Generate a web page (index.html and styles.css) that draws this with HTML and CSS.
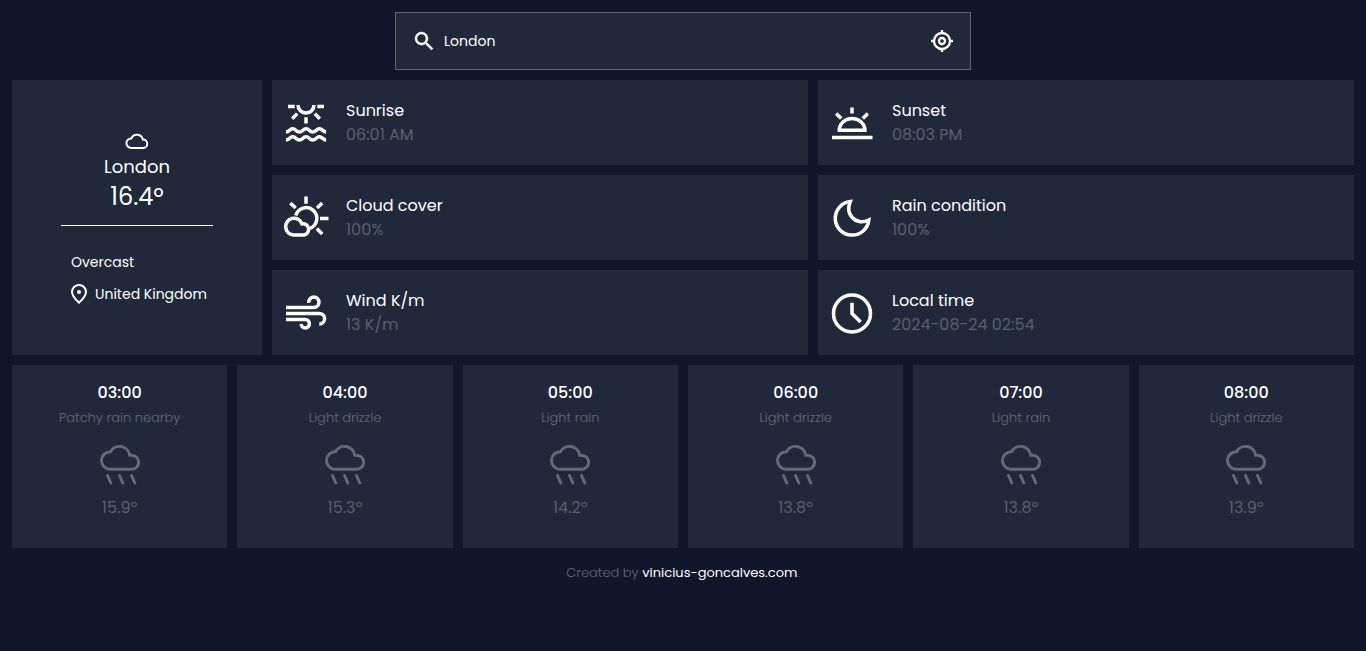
FILE: index.html
```html
<!DOCTYPE html>
<html lang="en">
<head>
<meta charset="utf-8">
<meta name="viewport" content="width=device-width, initial-scale=1">
<title>Weather</title>
<link rel="stylesheet" href="styles.css">
</head>
<body>
<svg class="sprite" aria-hidden="true">
  <symbol id="rain" viewBox="0 0 48 48">
    <path d="M14 29.3a8.8 8.8 0 0 1 .5-17.6A10.3 10.3 0 0 1 33.7 15.2h1.9a7.05 7.05 0 0 1 0 14.1z"/>
    <path d="M11.5 35.5l3.300 7.500M23.500 35.500l3.300 7.500M35.500 35.500l3.300 7.500"/>
  </symbol>
</svg>
<main class="page">
  <form class="search" role="search">
    <label class="search-label" for="city" aria-label="City">
      <svg class="icon-sm" viewBox="0 0 24 24"><path fill="currentColor" stroke="currentColor" stroke-width=".5" d="M15.5 14h-.79l-.28-.27A6.47 6.47 0 0 0 16 9.5 6.5 6.5 0 1 0 9.5 16c1.61 0 3.09-.59 4.23-1.57l.27.28v.79l5.5 5.49L20.99 19.5zm-6 0a4.5 4.5 0 1 1 0-9 4.5 4.5 0 0 1 0 9z"/></svg>
    </label>
    <input class="search-input" id="city" type="text" value="London">
    <button class="locate" type="button" aria-label="Use my location">
      <svg class="icon-sm" viewBox="0 0 24 24" fill="none" stroke="currentColor" stroke-width="2.3"><circle cx="12" cy="12" r="8"/><circle cx="12" cy="12" r="3"/><path d="M12 1v4M12 19v4M1 12h4M19 12h4"/></svg>
    </button>
  </form>

  <div class="overview">
    <section class="card current">
      <div class="current-top">
        <svg class="icon-sm" viewBox="0 0 24 24" fill="none" stroke="currentColor" stroke-width="2"><path d="M6.200 19a4.800 4.800 0 0 1 .1-9.600A6.100 6.100 0 0 1 17.900 10.600a4.200 4.200 0 0 1 .3 8.400z"/></svg>
        <h1 class="current-city">London</h1>
        <p class="current-temp">16.4º</p>
      </div>
      <div class="current-info">
        <p>Overcast</p>
        <p class="place"><svg class="pin" viewBox="0 0 16 20" fill="none" stroke="currentColor" stroke-width="2"><path d="M8 18.700C4.500 15.500 1 12.200 1 8a7 7 0 0 1 14 0c0 4.200-3.500 7.500-7 10.700z"/><circle cx="8" cy="8" r="2" fill="currentColor" stroke="none"/></svg>United Kingdom</p>
      </div>
    </section>

    <section class="details">
      <article class="card detail">
        <svg class="icon-lg" viewBox="0 0 48 48"><path d="M6 7.500h6.700M35.300 7.500H42M16 6a8 8 0 0 0 16 0M24 18.300v6.200M15.200 14.600l-5 5.200M32.800 14.600l5 5.200M4 33c3.300 0 3.300-3.200 6.700-3.200s3.300 3.200 6.700 3.200 3.300-3.200 6.700-3.200 3.300 3.200 6.600 3.200 3.400-3.200 6.700-3.200 3.300 3.200 6.700 3.200M4 41c3.300 0 3.300-3.200 6.700-3.200s3.300 3.200 6.700 3.200 3.300-3.200 6.700-3.200 3.300 3.200 6.600 3.200 3.400-3.200 6.700-3.200 3.300 3.200 6.700 3.200"/></svg>
        <div class="detail-text"><h2>Sunrise</h2><p>06:01 AM</p></div>
      </article>
      <article class="card detail">
        <svg class="icon-lg" viewBox="0 0 48 48"><path d="M4 38.500h40.500M11.300 31.200a12.800 11.600 0 0 1 25.600 0zM24 8.500v6M8.200 14.400l5 5M39.800 14.400l-5 5"/></svg>
        <div class="detail-text"><h2>Sunset</h2><p>08:03 PM</p></div>
      </article>
      <article class="card detail">
        <svg class="icon-lg" viewBox="0 0 48 48"><path d="M24 2.500v7.300M8.400 8.900l5.200 5.200M40.200 8.900l-5.200 5.200M38 24.500h8.500M34.800 34.600l5.400 5.400M13.800 21.500A10.700 10.700 0 1 1 28 34.300M11.700 41a8.400 8.400 0 1 1 8.300-11.200A5.600 5.600 0 1 1 21.900 41z"/></svg>
        <div class="detail-text"><h2>Cloud cover</h2><p>100%</p></div>
      </article>
      <article class="card detail">
        <svg class="icon-lg" viewBox="0 0 48 48"><path d="M22.300 7.600a16.800 16.800 0 1 0 18.500 18.400c-6.500 3.300-13 1.600-16.600-2.500-3.800-4.300-4.700-9.500-1.900-15.900z"/></svg>
        <div class="detail-text"><h2>Rain condition</h2><p>100%</p></div>
      </article>
      <article class="card detail">
        <svg class="icon-lg" viewBox="0 0 48 48"><path d="M4 18.500h27.700a5.250 5.250 0 0 0 0-10.500 5.300 5.300 0 0 0-5 5.800M4 24.500h33.300a5.300 5.300 0 0 1 0 10.600M4 30.500h19.200a4.200 4.200 0 0 1 0 8.400 4 4 0 0 1-4-4"/></svg>
        <div class="detail-text"><h2>Wind K/m</h2><p>13 K/m</p></div>
      </article>
      <article class="card detail">
        <svg class="icon-lg" viewBox="0 0 48 48"><circle cx="24" cy="24.500" r="18.500"/><path d="M24 13.800v10.700l8.600 8.600"/></svg>
        <div class="detail-text"><h2>Local time</h2><p>2024-08-24 02:54</p></div>
      </article>
    </section>
  </div>

  <section class="hours">
    <article class="card hour"><h3>03:00</h3><p class="sky">Patchy rain nearby</p><svg class="icon-rain"><use href="#rain"/></svg><p>15.9º</p></article>
    <article class="card hour"><h3>04:00</h3><p class="sky">Light drizzle</p><svg class="icon-rain"><use href="#rain"/></svg><p>15.3º</p></article>
    <article class="card hour"><h3>05:00</h3><p class="sky">Light rain</p><svg class="icon-rain"><use href="#rain"/></svg><p>14.2º</p></article>
    <article class="card hour"><h3>06:00</h3><p class="sky">Light drizzle</p><svg class="icon-rain"><use href="#rain"/></svg><p>13.8º</p></article>
    <article class="card hour"><h3>07:00</h3><p class="sky">Light rain</p><svg class="icon-rain"><use href="#rain"/></svg><p>13.8º</p></article>
    <article class="card hour"><h3>08:00</h3><p class="sky">Light drizzle</p><svg class="icon-rain"><use href="#rain"/></svg><p>13.9º</p></article>
  </section>

  <footer class="footer">Created by <a href="#">vinicius-goncalves.com</a>.</footer>
</main>
</body>
</html>
```
FILE: styles.css
```css
* {
  box-sizing: border-box;
  margin: 0;
  padding: 0;
}

body {
  background: #0f172a;
  color: #fff;
  font: 400 16px/24px Poppins, Inter, "Open Sans", sans-serif;
}

h1, h2, h3 {
  font-weight: 400;
  font-size: 16px;
}

svg {
  display: block;
  flex: none;
}

.sprite {
  display: none;
}

.page {
  display: flex;
  flex-direction: column;
  gap: 10px;
  padding: 12px;
}

.card {
  background: #20293a;
}

.icon-sm {
  width: 24px;
  height: 24px;
}

.icon-lg,
.icon-rain {
  width: 48px;
  height: 48px;
  fill: none;
  stroke: currentColor;
  stroke-width: 3.5px;
}

.icon-rain {
  margin: 10px 0 8px;
  color: #646a73;
  stroke-width: 3px;
  stroke-linecap: round;
}

.search {
  display: flex;
  align-items: center;
  gap: 8px;
  width: 100%;
  max-width: 576px;
  margin: 0 auto;
  padding: 16px;
  background: #20293a;
  border: 1px solid #5f6671;
}

.search-input {
  flex: 1;
  min-width: 0;
  height: 24px;
  border: 0;
  outline: 0;
  background: transparent;
  color: inherit;
  font: inherit;
  font-size: 14px;
}

.locate {
  border: 0;
  background: transparent;
  color: inherit;
  cursor: pointer;
}

.overview {
  display: grid;
  grid-template-columns: 250px 1fr;
  gap: 10px;
}

.current {
  display: flex;
  flex-direction: column;
  align-items: center;
  justify-content: center;
}

.current-top {
  display: flex;
  flex-direction: column;
  align-items: center;
  width: 152px;
  padding-bottom: 12px;
  border-bottom: 1px solid #fff;
}

.current-city {
  font-size: 18px;
  line-height: 28px;
}

.current-temp {
  font-size: 24px;
  line-height: 32px;
}

.current-info {
  display: flex;
  flex-direction: column;
  gap: 8px;
  width: 152px;
  padding: 24px 0 0 10px;
  font-size: 14px;
  white-space: nowrap;
}

.place {
  display: flex;
  align-items: center;
  gap: 8px;
}

.pin {
  width: 16px;
  height: 20px;
}

.details {
  display: grid;
  grid-template-columns: repeat(2, 1fr);
  gap: 10px;
}

.detail {
  display: flex;
  align-items: center;
  gap: 16px;
  min-height: 85px;
  padding: 10px;
}

.detail p,
.hour p {
  color: #59606a;
}

.hours {
  display: grid;
  grid-template-columns: repeat(6, 1fr);
  gap: 10px;
}

.hour {
  display: flex;
  flex-direction: column;
  align-items: center;
  padding: 16px 10px 28px;
}

.hour h3 {
  margin-bottom: 1px;
  font-weight: 500;
}

.hour .sky {
  color: #646a73;
  font-size: 13px;
  font-weight: 300;
}

.footer {
  padding-top: 3px;
  color: #646a73;
  font-size: 13px;
  font-weight: 300;
  text-align: center;
}

.footer a {
  color: #fff;
  font-weight: 400;
  text-decoration: none;
}
```
